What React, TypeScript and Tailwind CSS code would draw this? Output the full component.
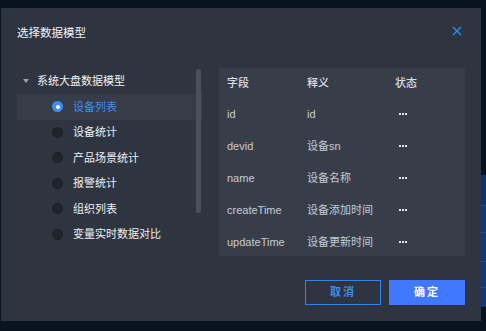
const models = ["设备列表", "设备统计", "产品场景统计", "报警统计", "组织列表", "变量实时数据对比"];

const rows = [
  { field: "id", label: "id" },
  { field: "devid", label: "设备sn" },
  { field: "name", label: "设备名称" },
  { field: "createTime", label: "设备添加时间" },
  { field: "updateTime", label: "设备更新时间" },
];

function Dots() {
  return (
    <div className="flex items-center gap-[1px] pl-[4px]">
      <span className="w-[2px] h-[2px] bg-[#e4e8ee]" />
      <span className="w-[2px] h-[2px] bg-[#e4e8ee]" />
      <span className="w-[2px] h-[2px] bg-[#e4e8ee]" />
    </div>
  );
}

export default function App() {
  const selected = 0;

  return (
    <div
      className="w-[486px] h-[331px] bg-[#08131f] flex overflow-hidden text-[11px]"
      style={{ fontFamily: '"Liberation Sans", "Noto Sans CJK SC", sans-serif' }}
    >
      {/* dialog */}
      <div className="mt-[8px] ml-[1px] w-[480px] h-[313px] bg-[#2f3540] flex flex-col">
        <div className="h-[50px] pl-4 pr-[19px] flex items-center justify-between">
          <span className="text-[#f2f4f7] text-[11.5px] mt-[1px]">选择数据模型</span>
          <svg width="10" height="10" viewBox="0 0 10 10" className="mt-[-4px]">
            <path d="M1 1L9 9M9 1L1 9" stroke="#2b8ff0" strokeWidth="1.4" />
          </svg>
        </div>

        <div className="mt-[10px] pl-4 pr-4 flex gap-4 h-[188px]">
          {/* tree */}
          <div className="relative w-[186px] h-[188px]">
            <div className="h-[26px] pl-[6px] flex items-center gap-[6px] text-[#eef0f3]">
              <svg width="6" height="4" viewBox="0 0 6 4">
                <path d="M0 0H6L3 4Z" fill="#9aa1ab" />
              </svg>
              <span className="ml-[2px]">系统大盘数据模型</span>
            </div>
            {models.map((m, i) => (
              <div
                key={m}
                className={`h-[25.5px] pl-[35px] flex items-center gap-[10px] ${i === selected ? "bg-[#363c48]" : ""}`}
              >
                {i === selected ? (
                  <span className="w-[11px] h-[11px] rounded-full bg-[#3d8ef6] flex items-center justify-center">
                    <span className="w-[4px] h-[4px] rounded-full bg-white" />
                  </span>
                ) : (
                  <span className="w-[11px] h-[11px] rounded-full bg-[#20242c] border border-[#1a1d23]" />
                )}
                <span className={i === selected ? "text-[#3d8ef6]" : "text-[#eceff3]"}>{m}</span>
              </div>
            ))}
            <div className="absolute left-[179px] top-[1px] w-[5px] h-[144px] rounded-full bg-[#4b515c]" />
          </div>

          {/* table */}
          <div className="w-[246px] h-[188px] bg-[#383e49] overflow-hidden">
            <div className="h-[30px] flex items-center text-[#d8dce2] font-medium">
              <div className="w-[80px] pl-2">字段</div>
              <div className="w-[88px] pl-2">释义</div>
              <div className="flex-1 pl-2">状态</div>
            </div>
            {rows.map((r) => (
              <div key={r.field} className="h-[32px] flex items-center text-[#c6ccd6]">
                <div className="w-[80px] pl-2">{r.field}</div>
                <div className="w-[88px] pl-2">{r.label}</div>
                <div className="flex-1 pl-2">
                  <Dots />
                </div>
              </div>
            ))}
          </div>
        </div>

        <div className="pt-[24px] pr-4 flex justify-end gap-2">
          <button className="w-[76px] h-[25px] border border-[#2a87ef] text-[#3a8ef5] font-bold tracking-[2px]">
            取消
          </button>
          <button className="w-[76px] h-[25px] bg-[#4079fd] text-white font-bold tracking-[2px]">
            确定
          </button>
        </div>
      </div>

      {/* page behind the dialog */}
      <div className="flex-1 pt-[175px] flex flex-col">
        <div className="h-[31px] bg-[#0a3572] border-b border-[#1b4c8e]" />
        <div className="h-[27px] bg-[#0c3a7c] border-b border-[#1b4c8e]" />
        <div className="h-[29px] bg-[#0c3a7c] border-b border-[#1b4c8e]" />
        <div className="h-[26px] bg-[#0c3a7c] border-b border-[#1b4c8e]" />
        <div className="h-[19px] bg-[#0c3a7c]" />
      </div>
    </div>
  );
}
